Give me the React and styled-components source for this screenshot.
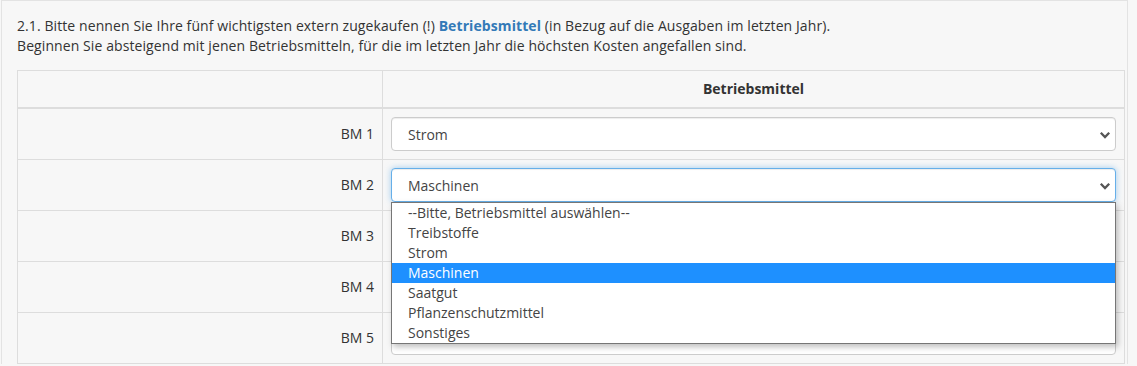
import React from "react";
import styled, { createGlobalStyle } from "styled-components";

const GlobalStyle = createGlobalStyle`
  body {
    margin: 0;
    padding-left: 1px;
    background-color: #f7f7f7;
    font-family: "Open Sans", "Noto Sans", sans-serif;
    font-size: 14px;
    line-height: 20px;
    color: #333;
  }
`;

const Well = styled.div`
  width: 1127px;
  box-sizing: border-box;
  padding: 15px 3px 0 15px;
  background-color: #f7f7f7;
  border: 1px solid #e3e3e3;
  border-bottom: none;
`;

const Intro = styled.p`
  margin: 0 0 14px;
  letter-spacing: 0.09px;

  strong {
    color: #337ab7;
    font-weight: 700;
  }
`;

const Table = styled.table`
  width: 1108px;
  border-collapse: collapse;
  table-layout: fixed;
`;

const HeadCell = styled.th`
  padding: 8px;
  height: 20px;
  text-align: center;
  font-weight: 700;
  border: 1px solid #ddd;
  border-bottom: 2px solid #ddd;
`;

const LabelCell = styled.td`
  padding: 8px;
  text-align: right;
  vertical-align: middle;
  border: 1px solid #ddd;
`;

const FieldCell = styled.td`
  padding: 8px;
  vertical-align: middle;
  border: 1px solid #ddd;
`;

const SelectWrap = styled.div`
  position: relative;
`;

const SelectBox = styled.div`
  display: flex;
  align-items: center;
  justify-content: space-between;
  height: 34px;
  box-sizing: border-box;
  padding: 1px 4px 0 16px;
  background-color: #fff;
  border: 1px solid ${(p) => (p.$focused ? "#66afe9" : "#ccc")};
  border-radius: 4px;
  box-shadow: ${(p) =>
    p.$focused
      ? "inset 0 1px 1px rgba(0,0,0,.075), 0 0 6px rgba(102,175,233,.6)"
      : "inset 0 1px 1px rgba(0,0,0,.075)"};
  color: #444;
`;

const OptionList = styled.ul`
  position: absolute;
  top: 34px;
  left: 0;
  right: 0;
  z-index: 5;
  margin: 0;
  padding: 0;
  list-style: none;
  background-color: #fff;
  border: 1px solid #767676;
  box-shadow: 2px 3px 6px rgba(0, 0, 0, 0.25);
`;

const OptionItem = styled.li`
  height: 20px;
  line-height: 20px;
  padding-left: 16px;
  color: ${(p) => (p.$selected ? "#fff" : "#444")};
  background-color: ${(p) => (p.$selected ? "#1e90ff" : "transparent")};
`;

const Chevron = () => (
  <svg width="12" height="8" viewBox="0 0 12 8">
    <path
      d="M1.8 1.8 L6 6 L10.2 1.8"
      fill="none"
      stroke="#555"
      strokeWidth="2.3"
    />
  </svg>
);

const options = [
  "--Bitte, Betriebsmittel auswählen--",
  "Treibstoffe",
  "Strom",
  "Maschinen",
  "Saatgut",
  "Pflanzenschutzmittel",
  "Sonstiges",
];

const rows = [
  { label: "BM 1", value: "Strom" },
  { label: "BM 2", value: "Maschinen", open: true },
  { label: "BM 3", value: "" },
  { label: "BM 4", value: "" },
  { label: "BM 5", value: "" },
];

export default function App() {
  return (
    <>
      <GlobalStyle />
      <Well>
        <Intro>
          2.1. Bitte nennen Sie Ihre fünf wichtigsten extern zugekaufen (!){" "}
          <strong>Betriebsmittel</strong> (in Bezug auf die Ausgaben im letzten
          Jahr).
          <br />
          Beginnen Sie absteigend mit jenen Betriebsmitteln, für die im letzten
          Jahr die höchsten Kosten angefallen sind.
        </Intro>
        <Table>
          <colgroup>
            <col style={{ width: 365 }} />
            <col />
          </colgroup>
          <thead>
            <tr>
              <HeadCell />
              <HeadCell>Betriebsmittel</HeadCell>
            </tr>
          </thead>
          <tbody>
            {rows.map((row) => (
              <tr key={row.label}>
                <LabelCell>{row.label}</LabelCell>
                <FieldCell>
                  <SelectWrap>
                    <SelectBox $focused={row.open}>
                      <span>{row.value}</span>
                      <Chevron />
                    </SelectBox>
                    {row.open && (
                      <OptionList>
                        {options.map((o) => (
                          <OptionItem key={o} $selected={o === row.value}>
                            {o}
                          </OptionItem>
                        ))}
                      </OptionList>
                    )}
                  </SelectWrap>
                </FieldCell>
              </tr>
            ))}
          </tbody>
        </Table>
      </Well>
    </>
  );
}
